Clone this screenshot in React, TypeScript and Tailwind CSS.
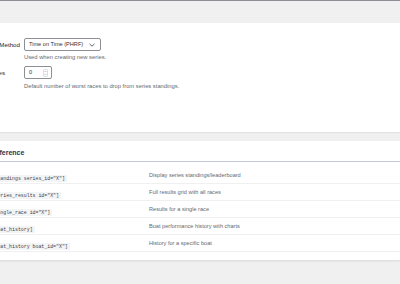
import React from 'react';

const shortcodes = [
  { code: '[sailing_standings series_id="X"]', desc: 'Display series standings/leaderboard' },
  { code: '[sailing_series_results id="X"]', desc: 'Full results grid with all races' },
  { code: '[sailing_single_race id="X"]', desc: 'Results for a single race' },
  { code: '[sailing_boat_history]', desc: 'Boat performance history with charts' },
  { code: '[sailing_boat_history boat_id="X"]', desc: 'History for a specific boat' },
];

const sans = "font-['Liberation_Sans',Arial,sans-serif]";

export default function App() {
  return (
    <div className={`w-[400px] h-[284px] overflow-hidden bg-[#f0f0f1] border-t border-[#8c8f94] ${sans}`}>
      <div className="h-[22px]" />

      {/* settings card */}
      <div className="bg-white h-[109px] pt-[15px] shadow-[0_1px_1px_rgba(0,0,0,0.06)]">
        <div className="flex items-start">
          <div className="w-[100px] -ml-[80px] shrink-0 flex justify-end text-[6.2px] leading-[13px] text-[#1d2327] whitespace-nowrap">
            <span>Default Scoring Method</span>
          </div>
          <div className="ml-[4px]">
            <div className="w-[77px] h-[13px] border border-[#8c8f94] rounded-[2px] flex items-center justify-between pl-[4px] pr-[4px] text-[5.6px] text-[#2c3338]">
              <span>Time on Time (PHRF)</span>
              <svg width="6" height="4" viewBox="0 0 6 4" className="mr-[1px]">
                <path d="M0.5 0.8 L3 3.2 L5.5 0.8" fill="none" stroke="#50575e" strokeWidth="0.9" />
              </svg>
            </div>
            <div className="mt-[2px] text-[5.8px] leading-[8px] text-[#646970]">Used when creating new series.</div>
          </div>
        </div>
        <div className="flex items-start mt-[5px]">
          <div className="w-[100px] -ml-[95px] shrink-0 flex justify-end text-[6.2px] leading-[13px] text-[#1d2327] whitespace-nowrap">
            <span>Drop Races</span>
          </div>
          <div className="ml-[19px]">
            <div className="w-[28px] h-[13px] border border-[#8c8f94] rounded-[2px] flex items-center justify-between pl-[4px] pr-[3px] text-[5.6px] text-[#2c3338]">
              <span>0</span>
              <svg width="5" height="8" viewBox="0 0 5 8">
                <rect x="0.5" y="0.5" width="4" height="7" rx="0.8" fill="none" stroke="#c3c4c7" strokeWidth="0.6" />
                <path d="M1.5 3 L2.5 2 L3.5 3" fill="none" stroke="#8c8f94" strokeWidth="0.5" />
                <path d="M1.5 5 L2.5 6 L3.5 5" fill="none" stroke="#8c8f94" strokeWidth="0.5" />
              </svg>
            </div>
            <div className="mt-[3px] text-[5.8px] leading-[8px] text-[#646970] whitespace-nowrap">Default number of worst races to drop from series standings.</div>
          </div>
        </div>
      </div>

      <div className="h-[9px]" />

      {/* shortcode reference card */}
      <div className="-ml-[36px] bg-white h-[119px] shadow-[0_1px_2px_rgba(0,0,0,0.1)]">
        <div className="h-[21px] pt-[4px] flex items-center border-b border-[#c3c8d6]">
          <span className="-ml-[10px] text-[7px] font-bold text-[#253650] whitespace-nowrap">Shortcode Reference</span>
        </div>
        <div className="pt-[5px]">
          {shortcodes.map((s) => (
            <div key={s.code} className="h-[17px] flex items-center border-b border-[#f0f0f1]">
              <div className="w-[185px] shrink-0 pl-[2px]">
                <code className="bg-[#f3f4f5] px-[2px] py-[1px] text-[4.9px] text-[#3c434a] font-['Liberation_Mono',monospace] whitespace-nowrap">
                  {s.code}
                </code>
              </div>
              <div className="text-[5.6px] text-[#646970] whitespace-nowrap">{s.desc}</div>
            </div>
          ))}
        </div>
      </div>
    </div>
  );
}
